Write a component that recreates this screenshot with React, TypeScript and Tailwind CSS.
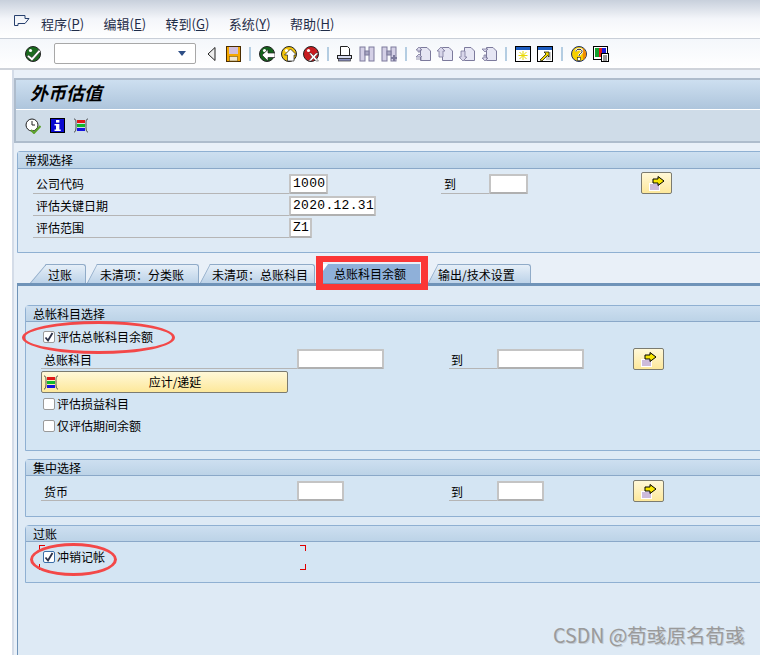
import React from 'react';

const CJK = "font-['Noto_Sans_CJK_SC','Liberation_Sans',sans-serif]";

function Ball({ fill, children }: { fill: string; children: React.ReactNode }) {
    return (
        <svg width="16" height="16" viewBox="0 0 16 16">
            <circle cx="8" cy="8" r="7.5" fill={fill} stroke="#222" strokeWidth="1" />
            <circle cx="5.5" cy="4.5" r="1.6" fill="#fff" />
            {children}
        </svg>
    );
}

function Enter() {
    return (
        <Ball fill="#1a6b1e">
            <path d="M3.5 9 L7 11.5 L14 3.5 L15.5 5.5 L7 15 L2 10.5 Z" fill="#fff" stroke="#333" strokeWidth="0.6" />
        </Ball>
    );
}

function Back() {
    return (
        <Ball fill="#14631c">
            <path d="M3 9 L9 3.5 V7 H16 V11.5 H9 V15 Z" fill="#fff" stroke="#222" strokeWidth="0.7" />
        </Ball>
    );
}

function Up() {
    return (
        <Ball fill="#f2c40c">
            <path d="M9.5 3 L15.5 9 H13 V15 H6.5 V9 H3.5 Z" fill="#fff" stroke="#222" strokeWidth="0.7" />
        </Ball>
    );
}

function Cancel() {
    return (
        <Ball fill="#c81c20">
            <path d="M6 7 L8 7 L10.5 9.5 L13 7 L15.5 7 L12 11 L15.5 15 L13 15 L10.5 12.5 L8 15 L5.5 15 L9 11 Z" fill="#fff" stroke="#333" strokeWidth="0.5" />
        </Ball>
    );
}

function Save() {
    return (
        <svg width="15" height="16" viewBox="0 0 15 16">
            <rect x="0.5" y="0.5" width="14" height="15" fill="#f5a800" stroke="#4a2c00" />
            <rect x="3" y="1" width="9" height="7" fill="#d0bedc" />
            <rect x="3.5" y="10.5" width="8" height="4.5" fill="#f0e6d0" stroke="#7b5a10" strokeWidth="0.6" />
        </svg>
    );
}

function Printer() {
    return (
        <svg width="16" height="16" viewBox="0 0 16 16">
            <path d="M3.5 0.5 H10.5 L12.5 2.5 V9.5 H3.5 Z" fill="#fff" stroke="#222" />
            <rect x="0.5" y="9.5" width="14" height="3" fill="#d8dcf0" stroke="#222" />
            <rect x="1.5" y="12.5" width="12" height="2.5" fill="#8a90c0" stroke="#333" strokeWidth="0.7" />
        </svg>
    );
}

function Binoc({ plus }: { plus?: boolean }) {
    return (
        <svg width="16" height="16" viewBox="0 0 16 16">
            <rect x="1" y="1" width="5" height="14" fill="#d4d0e6" stroke="#7c7a9c" />
            <rect x="10" y="1" width="5" height="14" fill="#d4d0e6" stroke="#7c7a9c" />
            <rect x="6" y="5" width="4" height="4" fill="#a8a6c2" stroke="#7c7a9c" />
            {plus && <path d="M10 12 H16 M13 9 V15" stroke="#7c7a9c" strokeWidth="2" />}
        </svg>
    );
}

function PageArrow({ kind }: { kind: 'first' | 'prev' | 'next' | 'last' }) {
    const arrow = {
        first: 'M4 1 L7 4 H5 V6 H3 V4 H1 Z M4 8 L7 11 H1 Z M1 13 H7',
        prev: 'M4 1 L8 5 H6 V11 H2 V5 H0 Z',
        next: 'M4 15 L8 11 H6 V5 H2 V11 H0 Z',
        last: 'M4 6 L7 3 H1 Z M4 15 L7 12 H5 V9 H3 V12 H1 Z',
    }[kind];
    return (
        <svg width="16" height="16" viewBox="0 0 16 16">
            <path d="M5.5 1.5 H12 L15.5 5 V14.5 H5.5 Z" fill="#e6e6f4" stroke="#7c7a9c" />
            <path d={arrow} fill="#d8d6ea" stroke="#7c7a9c" strokeWidth="0.8" />
        </svg>
    );
}

function WinNew() {
    return (
        <svg width="16" height="16" viewBox="0 0 16 16">
            <rect x="0.5" y="0.5" width="15" height="15" fill="#fff" stroke="#000" />
            <rect x="1" y="1" width="14" height="3" fill="#1c5cc0" />
            <path d="M8 5 V14 M3.5 9.5 H12.5 M4.5 6 L11.5 13 M11.5 6 L4.5 13" stroke="#e8d800" strokeWidth="1" />
        </svg>
    );
}

function WinLink() {
    return (
        <svg width="16" height="16" viewBox="0 0 16 16">
            <rect x="0.5" y="0.5" width="15" height="15" fill="#fff" stroke="#000" />
            <rect x="1" y="1" width="14" height="3" fill="#1c5cc0" />
            <rect x="9" y="6" width="5" height="8" fill="#ccc" />
            <path d="M3 14 L9 8 L7 6 H12 V11 L10.5 9.5 L5 15 Z" fill="#f2d800" stroke="#000" strokeWidth="0.7" />
        </svg>
    );
}

function Help() {
    return (
        <svg width="16" height="16" viewBox="0 0 16 16">
            <circle cx="8" cy="8" r="7.5" fill="#f7d000" stroke="#1a2a60" />
            <path d="M11.5 2 A7 7 0 0 1 12 14 Z" fill="#f08a00" />
            <path d="M5 5.5 C5 2.5 11 2.5 11 5.5 C11 7.5 8 7.5 8 10" fill="none" stroke="#fff" strokeWidth="2.4" />
            <path d="M5 5.5 C5 2.5 11 2.5 11 5.5 C11 7.5 8 7.5 8 10" fill="none" stroke="#222" strokeWidth="1" />
            <rect x="6.5" y="11.5" width="3" height="3" fill="#fff" stroke="#222" strokeWidth="0.6" />
        </svg>
    );
}

function Layout() {
    return (
        <svg width="16" height="16" viewBox="0 0 16 16">
            <rect x="0.5" y="0.5" width="14" height="13" fill="#fff" stroke="#000" />
            <rect x="2" y="2" width="4" height="9" fill="#12a02c" />
            <rect x="6" y="2" width="3" height="9" fill="#e01818" />
            <rect x="9" y="2" width="4" height="5" fill="#1a1ad8" />
            <rect x="8.5" y="7.5" width="7" height="8" fill="#fff" stroke="#000" />
            <path d="M10 10 H14 M10 12 H14 M10 14 H14" stroke="#000" strokeWidth="0.8" />
        </svg>
    );
}

function Clock() {
    return (
        <svg width="16" height="16" viewBox="0 0 16 16">
            <circle cx="7" cy="7" r="6" fill="#fff" stroke="#222" />
            <path d="M7 3 V7 H10" fill="none" stroke="#222" />
            <path d="M6 12 L9 15 L15.5 8" fill="none" stroke="#5aa028" strokeWidth="2" />
        </svg>
    );
}

function Info() {
    return (
        <svg width="15" height="15" viewBox="0 0 15 15">
            <rect x="0.5" y="0.5" width="14" height="14" fill="#0a0ad0" stroke="#000" />
            <rect x="6" y="2" width="3.4" height="2.6" fill="#fff" />
            <path d="M4.5 6 H9.4 V11.5 H10.8 V13 H4.5 V11.5 H6 V7.5 H4.5 Z" fill="#fff" />
        </svg>
    );
}

function Bars() {
    return (
        <svg width="16" height="15" viewBox="0 0 16 15">
            <path d="M1 1 C3 1 3 3 3 7 C3 11 3 14 1 14 M15 1 C13 1 13 3 13 7 C13 11 13 14 15 14" fill="none" stroke="#222" strokeWidth="0.8" />
            <rect x="4" y="2" width="8" height="3" fill="#e01818" />
            <rect x="4" y="6" width="8" height="3" fill="#12b82c" />
            <rect x="4" y="10" width="8" height="3" fill="#1414e0" />
        </svg>
    );
}

function MultiButton({ className }: { className: string }) {
    return (
        <div className={`flex h-[22px] w-[31px] items-center justify-center rounded-[2px] border border-[#7b7b70] bg-gradient-to-b from-[#fff8d8] to-[#fde89a] ${className}`}>
            <svg width="16" height="15" viewBox="0 0 16 15">
                <rect x="0.5" y="7.5" width="10" height="7" fill="#cdbbdb" stroke="#fff" />
                <path d="M4 3 H9 V0.5 L15 5 L9 9.5 V7 H4 Z" fill="#f7e600" stroke="#000" />
            </svg>
        </div>
    );
}

function Sep() {
    return <div className="mx-[5px] h-[14px] w-[2px] bg-[#b4cde2]" />;
}

function Slot({ children }: { children: React.ReactNode }) {
    return <div className="flex h-[22px] w-[22px] items-center justify-center">{children}</div>;
}

function GroupBox({ title, className, children }: { title: string; className: string; children: React.ReactNode }) {
    return (
        <section className={`rounded-tl-[4px] border border-[#8fb0d2] bg-[#d4e5f3] ${className}`}>
            <h2 className="h-[16px] border-b border-[#8aa8c8] bg-gradient-to-b from-[#cddff0] to-[#bcd3e7] pl-[7px] text-[12px] leading-[15px] font-normal text-black">
                {title}
            </h2>
            {children}
        </section>
    );
}

function Input({ value, className }: { value?: string; className: string }) {
    return (
        <div className={`h-[20px] shrink-0 rounded-[1px] border-2 border-[#c4c4c4] border-b-[#b0b0b0] bg-white pl-[2px] font-['Liberation_Mono',monospace] text-[13px] leading-[16px] tracking-[0.3px] text-black ${className}`}>
            {value}
        </div>
    );
}

function CheckRow({ label, checked, blue }: { label: string; checked?: boolean; blue?: boolean }) {
    return (
        <div className="flex h-[22px] items-center pl-[17px] text-[12px] text-black">
            <span className={`flex h-[12px] w-[12px] items-center justify-center rounded-[2px] border bg-white ${blue ? 'border-[#3a6ea8]' : 'border-[#9a9a9a]'}`}>
                {checked && (
                    <svg width="10" height="10" viewBox="0 0 10 10">
                        <path d="M1.5 5.5 L4 8.5 L8.5 1" fill="none" stroke="#2a3048" strokeWidth="1.8" />
                    </svg>
                )}
            </span>
            <span className="ml-[2px]">{label}</span>
        </div>
    );
}

function Tab({ label, className, first }: { label: string; className: string; first?: boolean }) {
    return (
        <div className={`relative h-[19px] shrink-0 rounded-tr-[3px] border-t border-r border-[#90abc8] bg-gradient-to-b from-[#e6eff8] to-[#bcd2e8] text-[12px] leading-[19px] text-black ${first ? '[clip-path:polygon(16px_0,100%_0,100%_100%,0_100%)]' : '[clip-path:polygon(10px_0,100%_0,100%_100%,0_100%)]'} ${className}`}>
            <svg className="absolute top-[-1px] left-0" width="16" height="19" viewBox="0 0 16 19">
                <path d={first ? 'M0 19 L16 0' : 'M0 19 L10 0'} stroke="#90abc8" strokeWidth="1.5" />
            </svg>
            {label}
        </div>
    );
}

export default function App() {
    return (
        <div className={`relative h-[655px] w-[760px] overflow-hidden bg-white ${CJK}`}>
            {/* menu bar */}
            <div className="flex h-[39px] border-b border-[#c9cfd8] bg-gradient-to-b from-[#c8d0dc] via-[#f4f6fa] to-white">
                <svg className="mt-[15px] ml-[14px]" width="16" height="12" viewBox="0 0 16 12">
                    <path d="M0.5 0.5 H11 V3.5 H15 L11 8.5 H4 V10.5 H0.5 Z" fill="none" stroke="#27406e" />
                </svg>
                <nav className="mt-[15px] ml-[11px] flex gap-[19.5px] text-[13px] leading-[18px] text-[#1f2c48]">
                    <span>程序(<u>P</u>)</span>
                    <span>编辑(<u>E</u>)</span>
                    <span>转到(<u>G</u>)</span>
                    <span>系统(<u>Y</u>)</span>
                    <span>帮助(<u>H</u>)</span>
                </nav>
            </div>

            {/* system toolbar */}
            <div className="flex h-[31px] items-center border-b-2 border-[#cfd3da] bg-gradient-to-b from-[#f4f7fb] to-white pl-[22px]">
                <Slot><Enter /></Slot>
                <div className="ml-[10px] flex h-[21px] w-[142px] items-center justify-end rounded-[2px] border border-[#a8a8a8] bg-white pr-[9px]">
                    <span className="h-0 w-0 border-x-[4px] border-t-[5px] border-x-transparent border-t-[#2f4f86]" />
                </div>
                <div className="ml-[4px] flex">
                    <Slot>
                        <svg width="9" height="14" viewBox="0 0 9 14">
                            <path d="M8 0.5 V13.5 L1 7 Z" fill="#eee" stroke="#222" />
                        </svg>
                    </Slot>
                    <Slot><Save /></Slot>
                </div>
                <Sep />
                <div className="flex">
                    <Slot><Back /></Slot>
                    <Slot><Up /></Slot>
                    <Slot><Cancel /></Slot>
                </div>
                <Sep />
                <div className="flex">
                    <Slot><Printer /></Slot>
                    <Slot><Binoc /></Slot>
                    <Slot><Binoc plus /></Slot>
                </div>
                <Sep />
                <div className="flex">
                    <Slot><PageArrow kind="first" /></Slot>
                    <Slot><PageArrow kind="prev" /></Slot>
                    <Slot><PageArrow kind="next" /></Slot>
                    <Slot><PageArrow kind="last" /></Slot>
                </div>
                <Sep />
                <div className="flex">
                    <Slot><WinNew /></Slot>
                    <Slot><WinLink /></Slot>
                </div>
                <Sep />
                <div className="flex">
                    <Slot><Help /></Slot>
                    <Slot><Layout /></Slot>
                </div>
            </div>

            <div className="flex h-[585px]">
                <div className="w-[14px] shrink-0 border-r-2 border-[#d4dce8] bg-white" />
                <main className="min-w-0 flex-1 bg-[#e9f0f8]">
                    <div className="mt-[8px] border-t-2 border-l-2 border-[#aebccc]">
                        <h1 className="h-[30px] border-b border-white bg-gradient-to-b from-[#cddff0] to-[#aec5dc] pl-[14px] text-[18px] leading-[24px] font-bold text-black italic">
                            外币估值
                        </h1>
                        <div className="flex h-[33px] items-center gap-[2px] border-b-2 border-[#aebccc] bg-[#cfdce8] pl-[6px]">
                            <Slot><Clock /></Slot>
                            <Slot><Info /></Slot>
                            <Slot><Bars /></Slot>
                        </div>
                    </div>

                    {/* general selection */}
                    <section className="mt-[8px] ml-[3px] h-[102px] w-[760px] rounded-tl-[3px] border border-[#8fb0d2] bg-[#deeaf5]">
                        <h2 className="h-[17px] border-b border-[#8aa8c8] bg-gradient-to-b from-[#cddff0] to-[#bcd3e7] pl-[7px] text-[12px] leading-[16px] font-normal text-black">
                            常规选择
                        </h2>
                        <div className="flex h-[22px] items-start pt-[5px] pl-[15px] text-[12px]">
                            <div className="h-[20px] w-[256px] border-b border-[#b5b5b5] pl-[3px] leading-[20px]">公司代码</div>
                            <Input value="1000" className="w-[39px]" />
                            <div className="ml-[113px] h-[20px] w-[48px] border-b border-[#b5b5b5] pl-[3px] leading-[20px]">到</div>
                            <Input className="w-[39px]" />
                            <MultiButton className="mt-[-2px] ml-[113px]" />
                        </div>
                        <div className="flex h-[22px] items-start pt-[5px] pl-[15px] text-[12px]">
                            <div className="h-[20px] w-[256px] border-b border-[#b5b5b5] pl-[3px] leading-[20px]">评估关键日期</div>
                            <Input value="2020.12.31" className="w-[87px]" />
                        </div>
                        <div className="flex h-[22px] items-start pt-[5px] pl-[15px] text-[12px]">
                            <div className="h-[20px] w-[256px] border-b border-[#b5b5b5] pl-[3px] leading-[20px]">评估范围</div>
                            <Input value="Z1" className="w-[23px]" />
                        </div>
                    </section>

                    {/* tab strip */}
                    <div className="mt-[10px] ml-[3px] flex h-[20px] items-end">
                        <Tab first label="过账" className="ml-[13px] w-[56px] pl-[18px]" />
                        <Tab label="未清项：分类账" className="ml-[1px] w-[112px] pl-[13px]" />
                        <Tab label="未清项：总账科目" className="ml-[1px] w-[115px] pl-[12px]" />
                        <div className="relative ml-[8px] h-[19px] w-[97px] shrink-0 bg-[#8fb0d9] pl-[11px] text-[12px] leading-[20px] text-black">
                            <span className="absolute top-0 left-0 h-0 w-0 border-t-[7px] border-r-[5px] border-t-white border-r-transparent" />
                            总账科目余额
                        </div>
                        <Tab label="输出/技术设置" className="ml-[8px] w-[103px] pl-[10px]" />
                    </div>

                    <div className="ml-[3px] h-[373px] w-[760px] border-t-[3px] border-l border-[#6f93b8] bg-[#deeaf5]">
                        {/* gl selection */}
                        <GroupBox title="总帐科目选择" className="mt-[19px] ml-[7px] h-[146px]">
                            <div className="pt-[4px]">
                                <CheckRow checked label="评估总帐科目余额" />
                            </div>
                            <div className="flex h-[23px] items-start pl-[15px] text-[12px]">
                                <div className="mt-[1px] h-[20px] w-[256px] border-b border-[#b5b5b5] pl-[3px] leading-[22px]">总账科目</div>
                                <Input className="mt-[1px] w-[87px]" />
                                <div className="mt-[1px] ml-[65px] h-[20px] w-[48px] border-b border-[#b5b5b5] pl-[2px] leading-[22px]">到</div>
                                <Input className="mt-[1px] w-[87px]" />
                                <MultiButton className="ml-[49px]" />
                            </div>
                            <div className="ml-[15px] flex h-[22px] w-[247px] items-center rounded-[2px] border border-[#7b7b70] bg-gradient-to-b from-[#fff8d8] to-[#fde89a] pl-[1px] text-[12px]">
                                <Bars />
                                <span className="flex-1 pl-[4px] text-center">应计/递延</span>
                            </div>
                            <CheckRow label="评估损益科目" />
                            <CheckRow label="仅评估期间余额" />
                        </GroupBox>

                        {/* concentrated selection */}
                        <GroupBox title="集中选择" className="mt-[8px] ml-[7px] h-[58px]">
                            <div className="flex h-[23px] items-start pt-[5px] pl-[15px] text-[12px]">
                                <div className="h-[20px] w-[256px] border-b border-[#b5b5b5] pl-[3px] leading-[22px]">货币</div>
                                <Input className="w-[47px]" />
                                <div className="ml-[105px] h-[20px] w-[48px] border-b border-[#b5b5b5] pl-[2px] leading-[22px]">到</div>
                                <Input className="w-[47px]" />
                                <MultiButton className="mt-[-1px] ml-[89px]" />
                            </div>
                        </GroupBox>

                        {/* posting */}
                        <GroupBox title="过账" className="mt-[8px] ml-[7px] h-[58px]">
                            <div className="pt-[4px]">
                                <CheckRow checked blue label="冲销记帐" />
                            </div>
                        </GroupBox>
                    </div>
                </main>
            </div>

            {/* red corner brackets round the reversal field */}
            <span className="absolute top-[545px] left-[39px] h-[6px] w-[6px] border-t border-l border-[#e00000]" />
            <span className="absolute top-[564px] left-[39px] h-[6px] w-[6px] border-b border-l border-[#e00000]" />
            <span className="absolute top-[545px] left-[300px] h-[6px] w-[6px] border-t border-r border-[#e00000]" />
            <span className="absolute top-[564px] left-[300px] h-[6px] w-[6px] border-r border-b border-[#e00000]" />

            {/* annotations over the shot */}
            <div className="pointer-events-none absolute top-[256px] left-[316px] h-[34px] w-[112px] border-x-[7px] border-y-[6px] border-[#fb3636]" />
            <div className="pointer-events-none absolute top-[321px] left-[22px] h-[33px] w-[153px] rounded-[50%] border-[3px] border-[#f34848]" />
            <div className="pointer-events-none absolute top-[543px] left-[30px] h-[33px] w-[87px] rounded-[50%] border-[3px] border-[#f34848]" />
            <div className="absolute top-[622px] left-[553px] text-[19.6px] leading-[26px] whitespace-nowrap text-[#9a9a9a] [text-shadow:1px_1px_0_#c4ccd4]">
                CSDN @荀彧原名荀彧
            </div>
        </div>
    );
}
